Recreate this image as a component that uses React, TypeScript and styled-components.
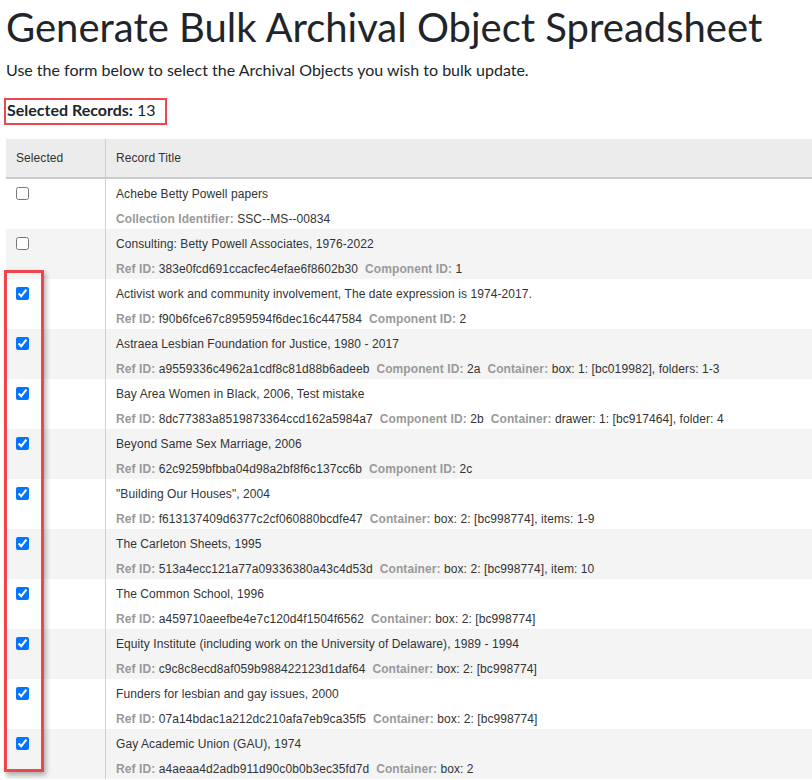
import React from 'react'
import styled, { createGlobalStyle } from 'styled-components'

const GlobalStyle = createGlobalStyle`
  html, body {
    margin: 0;
    padding: 0;
    background: #ffffff;
  }
  body {
    font-family: Lato, "Liberation Sans", sans-serif;
    color: #212529;
    overflow: hidden;
  }
`

const Page = styled.div`
  padding: 3px 0 0 6px;
  position: relative;
`

const Title = styled.h1`
  margin: 0 0 7px 0;
  font-family: Lato, sans-serif;
  font-size: 40px;
  font-weight: 400;
  line-height: 48px;
  color: #212529;
`

const Lead = styled.p`
  margin: 0 0 16px 0;
  font-size: 16px;
  line-height: 24px;
`

// red box drawn around the counter in the reference
const Counter = styled.div`
  display: inline-block;
  margin-left: -2px;
  padding: 0 9px 3px 1px;
  border: 2px solid #ef464c;
  font-size: 16px;
  line-height: 20px;

  strong {
    font-weight: 700;
  }
`

const TableWrap = styled.div`
  position: relative;
  margin-top: 14px;
`

const Table = styled.table`
  width: 100%;
  border-collapse: collapse;
  font-family: 'Liberation Sans', Arial, sans-serif;
  font-size: 12px;
  letter-spacing: 0.08px;
  color: #333333;
`

const HeadCell = styled.th<{ $narrow?: boolean }>`
  height: 38px;
  padding: 0 10px;
  background: #ececec;
  border-bottom: 2px solid #cccccc;
  border-right: ${p => (p.$narrow ? '1px solid #d0d0d0' : 'none')};
  width: ${p => (p.$narrow ? '79px' : 'auto')};
  font-weight: 400;
  text-align: left;
  vertical-align: middle;
`

const Row = styled.tr<{ $striped: boolean }>`
  background: ${p => (p.$striped ? '#f4f4f4' : '#ffffff')};
`

const CheckCell = styled.td`
  height: 50px;
  box-sizing: border-box;
  padding: 8px 10px 0;
  vertical-align: top;
  border-right: 1px solid #d0d0d0;
`

const Check = styled.input`
  display: block;
  margin: 0;
  width: 13px;
  height: 13px;
`

const TitleCell = styled.td`
  height: 50px;
  box-sizing: border-box;
  padding: 8px 10px 3px;
  vertical-align: top;
`

const RecordTitle = styled.div`
  line-height: 14px;
  white-space: nowrap;
`

const Meta = styled.div`
  margin-top: 11px;
  line-height: 14px;
  white-space: nowrap;
`

const MetaItem = styled.span`
  margin-right: 7px;

  b {
    color: #999999;
    font-weight: 700;
  }
`

const Callout = styled.div`
  position: absolute;
  left: -2px;
  top: 131px;
  width: 34px;
  height: 496px;
  border: 3px solid #ef464c;
  box-shadow: 2px 3px 5px rgba(0, 0, 0, 0.3);
  pointer-events: none;
`

type Field = [string, string]

type Record = {
  title: string
  checked: boolean
  meta: Field[]
}

const RECORDS: Record[] = [
  {
    title: 'Achebe Betty Powell papers',
    checked: false,
    meta: [['Collection Identifier', 'SSC--MS--00834']]
  },
  {
    title: 'Consulting: Betty Powell Associates, 1976-2022',
    checked: false,
    meta: [
      ['Ref ID', '383e0fcd691ccacfec4efae6f8602b30'],
      ['Component ID', '1']
    ]
  },
  {
    title: 'Activist work and community involvement, The date expression is 1974-2017.',
    checked: true,
    meta: [
      ['Ref ID', 'f90b6fce67c8959594f6dec16c447584'],
      ['Component ID', '2']
    ]
  },
  {
    title: 'Astraea Lesbian Foundation for Justice, 1980 - 2017',
    checked: true,
    meta: [
      ['Ref ID', 'a9559336c4962a1cdf8c81d88b6adeeb'],
      ['Component ID', '2a'],
      ['Container', 'box: 1: [bc019982], folders: 1-3']
    ]
  },
  {
    title: 'Bay Area Women in Black, 2006, Test mistake',
    checked: true,
    meta: [
      ['Ref ID', '8dc77383a8519873364ccd162a5984a7'],
      ['Component ID', '2b'],
      ['Container', 'drawer: 1: [bc917464], folder: 4']
    ]
  },
  {
    title: 'Beyond Same Sex Marriage, 2006',
    checked: true,
    meta: [
      ['Ref ID', '62c9259bfbba04d98a2bf8f6c137cc6b'],
      ['Component ID', '2c']
    ]
  },
  {
    title: '"Building Our Houses", 2004',
    checked: true,
    meta: [
      ['Ref ID', 'f613137409d6377c2cf060880bcdfe47'],
      ['Container', 'box: 2: [bc998774], items: 1-9']
    ]
  },
  {
    title: 'The Carleton Sheets, 1995',
    checked: true,
    meta: [
      ['Ref ID', '513a4ecc121a77a09336380a43c4d53d'],
      ['Container', 'box: 2: [bc998774], item: 10']
    ]
  },
  {
    title: 'The Common School, 1996',
    checked: true,
    meta: [
      ['Ref ID', 'a459710aeefbe4e7c120d4f1504f6562'],
      ['Container', 'box: 2: [bc998774]']
    ]
  },
  {
    title: 'Equity Institute (including work on the University of Delaware), 1989 - 1994',
    checked: true,
    meta: [
      ['Ref ID', 'c9c8c8ecd8af059b988422123d1daf64'],
      ['Container', 'box: 2: [bc998774]']
    ]
  },
  {
    title: 'Funders for lesbian and gay issues, 2000',
    checked: true,
    meta: [
      ['Ref ID', '07a14bdac1a212dc210afa7eb9ca35f5'],
      ['Container', 'box: 2: [bc998774]']
    ]
  },
  {
    title: 'Gay Academic Union (GAU), 1974',
    checked: true,
    meta: [
      ['Ref ID', 'a4aeaa4d2adb911d90c0b0b3ec35fd7d'],
      ['Container', 'box: 2']
    ]
  }
]

export default function App() {
  const selected = 13

  return (
    <Page>
      <GlobalStyle />
      <Title>Generate Bulk Archival Object Spreadsheet</Title>
      <Lead>Use the form below to select the Archival Objects you wish to bulk update.</Lead>
      <Counter>
        <strong>Selected Records:</strong> {selected}
      </Counter>

      <TableWrap>
        <Table>
          <thead>
            <tr>
              <HeadCell $narrow>Selected</HeadCell>
              <HeadCell>Record Title</HeadCell>
            </tr>
          </thead>
          <tbody>
            {RECORDS.map((rec, i) => (
              <Row key={rec.title} $striped={i % 2 === 1}>
                <CheckCell>
                  <Check type="checkbox" defaultChecked={rec.checked} />
                </CheckCell>
                <TitleCell>
                  <RecordTitle>{rec.title}</RecordTitle>
                  <Meta>
                    {rec.meta.map(([label, value]) => (
                      <MetaItem key={label}>
                        <b>{label}:</b> {value}
                      </MetaItem>
                    ))}
                  </Meta>
                </TitleCell>
              </Row>
            ))}
          </tbody>
        </Table>
        <Callout />
      </TableWrap>
    </Page>
  )
}
